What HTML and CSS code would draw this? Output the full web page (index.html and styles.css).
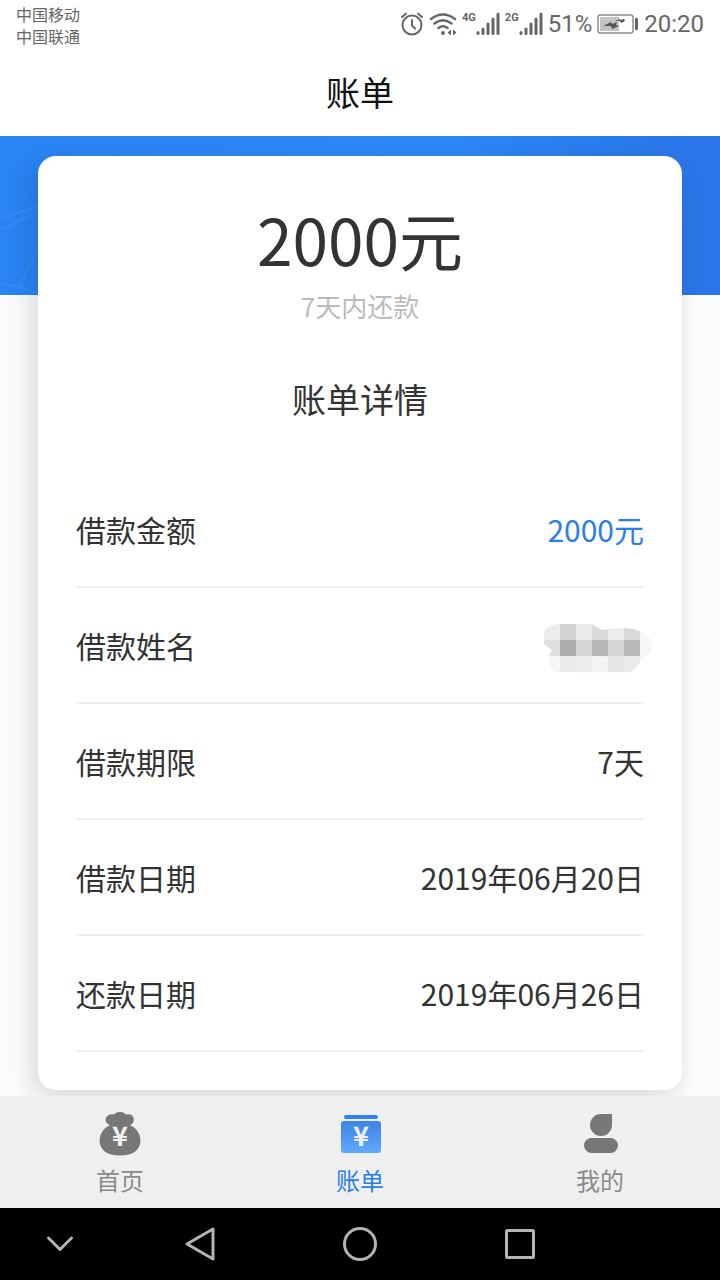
FILE: index.html
```html
<!DOCTYPE html>
<html lang="zh-CN">
<head>
    <meta charset="utf-8">
    <title>账单</title>
    <meta name="viewport" content="width=device-width, initial-scale=1.0">
    <link rel="stylesheet" href="styles.css">
</head>
<body>
    <div class="status-bar">
        <div class="carriers">中国移动<br>中国联通</div>
        <div class="status-icons">
            <svg width="24" height="26" viewBox="0 0 24 26" fill="none" stroke="#666" stroke-width="2" stroke-linecap="round">
                <circle cx="12" cy="14" r="9.5"/>
                <path d="M12 9v5.500l3 3M2 6l4-3.500M22 6l-4-3.500"/>
            </svg>
            <svg width="28" height="26" viewBox="0 0 28 26" fill="none" stroke="#666" stroke-width="2.500" stroke-linecap="round">
                <path d="M2 8q12-9 24 0M5.500 12.500q8.500-6.500 17 0M9.500 17q4.500-3.500 9 0"/>
                <circle cx="14" cy="22" r="2" fill="#666" stroke="none"/>
                <path d="M22 18.500v6l-3.500-3zM24 18.500v6l3.500-3z" fill="#666" stroke="none"/>
            </svg>
            <span class="signal">
                <small>4G</small>
                <svg width="24" height="24" viewBox="0 0 24 24" stroke="#666" stroke-width="3" stroke-linecap="round">
                    <path d="M2 20.500v1M7 17v4.500M12 12v9.500M17 7v14.500M22 2v19.500"/>
                </svg>
            </span>
            <span class="signal">
                <small>2G</small>
                <svg width="24" height="24" viewBox="0 0 24 24" stroke="#666" stroke-width="3" stroke-linecap="round">
                    <path d="M2 20.500v1M7 17v4.500M12 12v9.500M17 7v14.500M22 2v19.500"/>
                </svg>
            </span>
            <span>51%</span>
            <svg width="42" height="20" viewBox="0 0 42 20">
                <rect x="1" y="1" width="35" height="18" rx="2.500" fill="none" stroke="#8c8c8c" stroke-width="1.500"/>
                <rect x="3" y="3" width="19" height="14" fill="#c4c4c4"/>
                <path d="M6 12l8-4 1 2 5-2-1 3 3 1-7 3-1-3zM18 7l5-2 0 1 4-1 1 2-4 2-1-2z" fill="#555"/>
                <rect x="38" y="4" width="3" height="12" rx="1" fill="#666"/>
            </svg>
            <span>20:20</span>
        </div>
    </div>

    <header class="title-bar">
        <h1>账单</h1>
    </header>

    <main class="content">
        <div class="banner">
            <svg width="120" height="159" viewBox="0 0 120 159" fill="none" stroke="#4b9df8" stroke-opacity="0.300" stroke-width="2">
                <path d="M0 83L60 62M0 94L60 66M18 152L46 96M0 147Q22 150 50 162"/>
            </svg>
        </div>
        <section class="card">
            <p class="amount">2000元</p>
            <p class="due">7天内还款</p>
            <h2>账单详情</h2>
            <dl class="details">
                <div class="row">
                    <dt>借款金额</dt>
                    <dd class="blue">2000元</dd>
                </div>
                <div class="row">
                    <dt>借款姓名</dt>
                    <dd class="masked">
                        <svg width="110" height="56" viewBox="0 0 110 56">
                            <clipPath id="blob">
                                <path d="M0 8Q3 1 14 0H47L58 6 78 4 90 5 98 8Q108 14 109 22 108 30 98 36L88 48H11Q4 42 5 32L8 26 0 20z"/>
                            </clipPath>
                            <path d="M30 48Q50 60 80 54L92 44z" fill="#fdfdfd"/>
                            <g clip-path="url(#blob)" shape-rendering="crispEdges">
                                <rect width="110" height="48" fill="#f6f6f6"/>
                                <rect width="16" height="16" fill="#ededed"/>
                                <rect x="16" width="16" height="16" fill="#d3d3d3"/>
                                <rect x="32" width="16" height="16" fill="#ebebeb"/>
                                <rect x="48" width="16" height="16" fill="#dadada"/>
                                <rect x="64" width="16" height="16" fill="#ececec"/>
                                <rect x="80" width="16" height="16" fill="#dadada"/>
                                <rect y="16" width="16" height="16" fill="#dfdfdf"/>
                                <rect x="16" y="16" width="16" height="16" fill="#aeaeae"/>
                                <rect x="32" y="16" width="16" height="16" fill="#d5d5d5"/>
                                <rect x="48" y="16" width="16" height="16" fill="#b7b7b7"/>
                                <rect x="64" y="16" width="16" height="16" fill="#d5d5d5"/>
                                <rect x="80" y="16" width="16" height="16" fill="#b9b9b9"/>
                                <rect x="16" y="32" width="16" height="16" fill="#ebebeb"/>
                                <rect x="32" y="32" width="16" height="16" fill="#eeeeee"/>
                                <rect x="48" y="32" width="16" height="16" fill="#f3f3f3"/>
                                <rect x="64" y="32" width="16" height="16" fill="#e6e6e6"/>
                                <rect x="80" y="32" width="16" height="16" fill="#eaeaea"/>
                            </g>
                            <path d="M57 38l6-3 1 2z" fill="#fff"/>
                        </svg>
                    </dd>
                </div>
                <div class="row">
                    <dt>借款期限</dt>
                    <dd>7天</dd>
                </div>
                <div class="row">
                    <dt>借款日期</dt>
                    <dd>2019年06月20日</dd>
                </div>
                <div class="row">
                    <dt>还款日期</dt>
                    <dd>2019年06月26日</dd>
                </div>
            </dl>
        </section>
    </main>

    <nav class="tab-bar">
        <a class="tab" href="#home">
            <svg width="48" height="48" viewBox="0 0 48 48">
                <path d="M14 15Q8 13 10 7.500 13 3 18 4.500 20 1.500 24 2 28 1.500 30 4.500 36 3 37.500 8 39 13 34 15 44 20 44.500 30 44 45.500 24 45.500 4 45.500 3.500 30 4 20 14 15z" fill="#777"/>
                <text class="yuan" x="24" y="36" text-anchor="middle">¥</text>
            </svg>
            <span>首页</span>
        </a>
        <a class="tab active" href="#bill">
            <svg width="48" height="48" viewBox="0 0 48 48">
                <defs>
                    <linearGradient id="bill-fill" x1="0" y1="0" x2="0" y2="1">
                        <stop offset="0" stop-color="#3b83e9"/>
                        <stop offset="1" stop-color="#62a8fc"/>
                    </linearGradient>
                </defs>
                <rect x="8" y="5" width="34" height="4" rx="2" fill="#2f83ee"/>
                <rect x="5" y="11" width="40" height="32" rx="3" fill="url(#bill-fill)"/>
                <text class="yuan" x="25" y="36" text-anchor="middle">¥</text>
            </svg>
            <span>账单</span>
        </a>
        <a class="tab" href="#mine">
            <svg width="48" height="48" viewBox="0 0 48 48" fill="#777">
                <path d="M25 4h11v11a11 11 0 1 1-11-11z"/>
                <rect x="8" y="28" width="34" height="15" rx="7.500"/>
            </svg>
            <span>我的</span>
        </a>
    </nav>

    <div class="system-nav">
        <button aria-label="收起">
            <svg width="40" height="40" viewBox="0 0 40 40"><path d="M8.500 14L20 25.500 31.500 14"/></svg>
        </button>
        <button aria-label="返回">
            <svg width="40" height="40" viewBox="0 0 40 40"><path d="M33 5V35L7 20z"/></svg>
        </button>
        <button aria-label="主屏幕">
            <svg width="40" height="40" viewBox="0 0 40 40"><circle cx="20" cy="20" r="15.500"/></svg>
        </button>
        <button aria-label="最近任务">
            <svg width="40" height="40" viewBox="0 0 40 40"><rect x="6.500" y="6.500" width="27" height="27" rx="1"/></svg>
        </button>
    </div>
</body>
</html>
```
FILE: styles.css
```css
/* General styling */
* {
    box-sizing: border-box;
}
body {
    margin: 0;
    min-height: 100vh;
    display: flex;
    flex-direction: column;
    background: #fff;
    color: #333;
    font-family: "Noto Sans CJK SC", sans-serif;
}
h1, h2, p, dl, dd {
    margin: 0;
    font-weight: normal;
}
svg {
    display: block;
}

/* Status bar */
.status-bar {
    display: flex;
    justify-content: space-between;
    height: 48px;
    padding: 3px 16px 0;
    color: #666;
}
.carriers {
    font-size: 16px;
    line-height: 22px;
}
.status-icons {
    display: flex;
    align-items: center;
    gap: 5px;
    height: 42px;
    font-family: Roboto, sans-serif;
    font-size: 24px;
}
.signal {
    display: flex;
    align-items: flex-start;
}
.signal small {
    font-size: 11px;
    font-weight: bold;
    line-height: 12px;
}

/* Title bar */
.title-bar {
    height: 88px;
    text-align: center;
}
.title-bar h1 {
    font-size: 34px;
    line-height: 88px;
    color: #111;
}

/* Content */
.content {
    position: relative;
    flex: 1;
    padding: 20px 38px 6px;
    background: #fcfcff;
    overflow: hidden;
}
.banner {
    position: absolute;
    top: 0;
    left: 0;
    right: 0;
    height: 159px;
    background: linear-gradient(100deg, #2a84f4 0%, #2b89f6 60%, #2a75e8 95%);
}
.card {
    position: relative;
    height: 100%;
    padding: 36px 38px 38px;
    border-radius: 18px;
    background: #fff;
    box-shadow: -6px 8px 28px rgba(0, 0, 0, 0.15);
    text-align: center;
}
.amount {
    font-size: 64px;
    line-height: 92px;
}
.due {
    font-size: 26px;
    line-height: 44px;
    color: #bbb;
}
.card h2 {
    margin-top: 49px;
    font-size: 34px;
    line-height: 44px;
}
.details {
    margin-top: 51px;
    font-size: 30px;
}
.row {
    display: flex;
    justify-content: space-between;
    align-items: center;
    height: 116px;
    border-bottom: 2px solid #eee;
}
.blue {
    color: #2a80e4;
}
.masked {
    margin-right: -10px;
    padding-top: 14px;
}

/* Tab bar */
.tab-bar {
    display: flex;
    height: 112px;
    border-top: 1px solid #f3f3f3;
    background: #efefef;
}
.tab {
    flex: 1;
    display: flex;
    flex-direction: column;
    align-items: center;
    padding-top: 13px;
    font-size: 24px;
    line-height: 44px;
    color: #8a8a8a;
    text-decoration: none;
}
.tab.active {
    color: #2a80e4;
}
.yuan {
    font-family: "Noto Sans CJK SC", sans-serif;
    font-size: 27px;
    font-weight: bold;
    fill: #f0f0f0;
}

/* System navigation */
.system-nav {
    display: grid;
    grid-template-columns: 3fr 4fr 4fr 4fr 3fr;
    height: 72px;
    background: #000;
}
.system-nav button {
    display: flex;
    justify-content: center;
    align-items: center;
    padding: 0;
    border: none;
    background: none;
    cursor: pointer;
}
.system-nav svg {
    fill: none;
    stroke: #b4b4b4;
    stroke-width: 3;
    stroke-linecap: round;
    stroke-linejoin: round;
}
```
